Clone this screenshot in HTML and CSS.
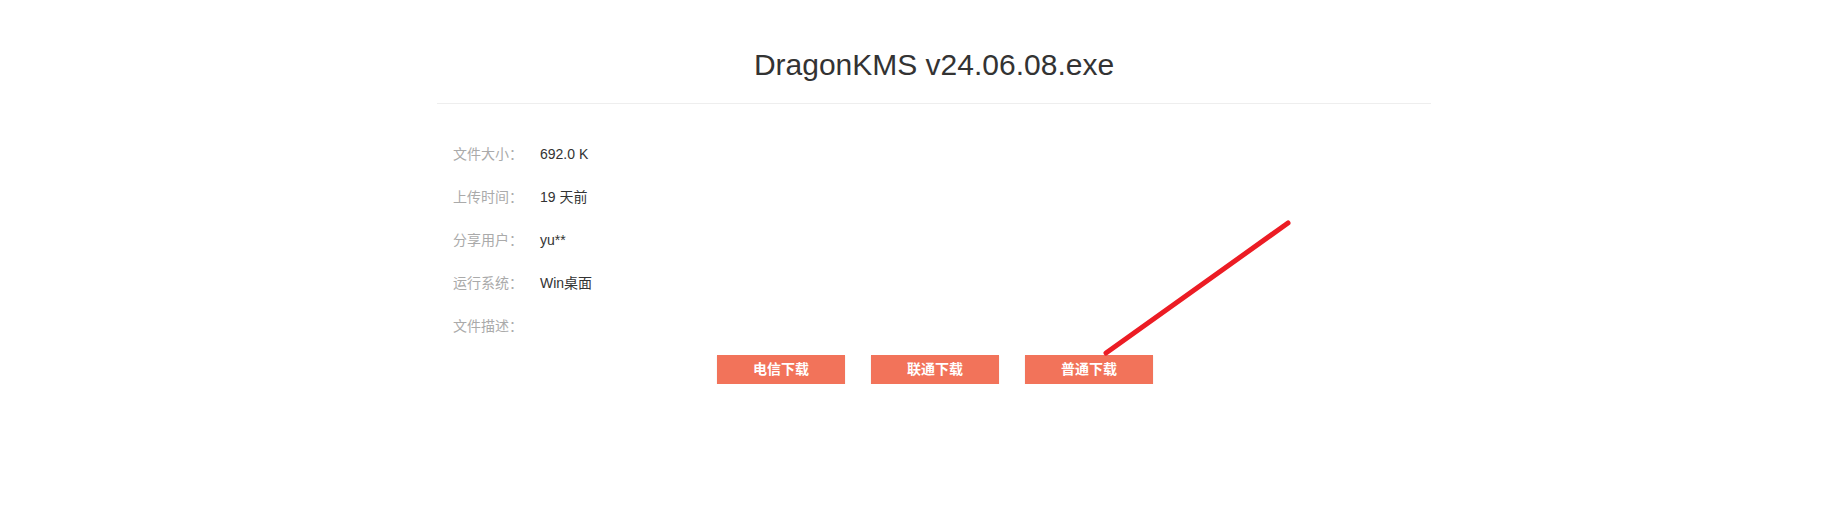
FILE: index.html
```html
<!DOCTYPE html>
<html lang="zh-CN">
<head>
  <meta charset="UTF-8">
  <meta name="viewport" content="width=device-width, initial-scale=1.0">
  <title>DragonKMS v24.06.08.exe</title>
  <link rel="stylesheet" href="styles.css">
</head>
<body>
  <div class="page">
    <h1 class="file-title">DragonKMS v24.06.08.exe</h1>

    <div class="file-info">
      <div class="info-row"><span class="info-label">文件大小：</span><span class="info-value">692.0 K</span></div>
      <div class="info-row"><span class="info-label">上传时间：</span><span class="info-value">19 天前</span></div>
      <div class="info-row"><span class="info-label">分享用户：</span><span class="info-value">yu**</span></div>
      <div class="info-row"><span class="info-label">运行系统：</span><span class="info-value">Win桌面</span></div>
      <div class="info-row"><span class="info-label">文件描述：</span><span class="info-value"></span></div>
    </div>

    <div class="down-btns">
      <a class="down-btn" href="#">电信下载</a>
      <a class="down-btn" href="#">联通下载</a>
      <a class="down-btn" href="#">普通下载</a>
    </div>
  </div>

  <!-- red arrow mark -->
  <svg class="mark" width="1833" height="520" viewBox="0 0 1833 520">
    <line x1="1288" y1="223" x2="1106" y2="353" stroke="#ec1c24" stroke-width="5" stroke-linecap="round"/>
  </svg>
</body>
</html>
```

FILE: styles.css
```css
body {
  margin: 0;
  font-family: "Liberation Sans", Arial, "Noto Sans CJK SC", sans-serif;
  background-color: #fff;
  color: #333;
}
.page {
  width: 994px;
  margin-left: 437px;
}
.file-title {
  margin: 0;
  padding: 48px 0 21px;
  font-size: 30px;
  line-height: 34px;
  font-weight: normal;
  text-align: center;
  color: #333;
  border-bottom: 1px solid #eee;
}
.file-info {
  padding: 29px 16px 0;
}
.info-row {
  display: flex;
  font-size: 14px;
  line-height: 43px;
  height: 43px;
}
.info-label {
  width: 87px;
  color: #aaa;
}
.info-value {
  color: #333;
}
.down-btns {
  display: flex;
  justify-content: center;
  gap: 26px;
  margin-top: 7px;
  padding-left: 2px;
}
.down-btn {
  display: block;
  width: 128px;
  height: 29px;
  line-height: 29px;
  background-color: #f2735a;
  color: #fff;
  font-size: 14px;
  font-weight: bold;
  text-align: center;
  text-decoration: none;
  box-shadow: 0 1px 1px rgba(0, 0, 0, 0.15);
}

/* red mark */
.mark {
  position: absolute;
  top: 0;
  left: 0;
  pointer-events: none;
}
```
